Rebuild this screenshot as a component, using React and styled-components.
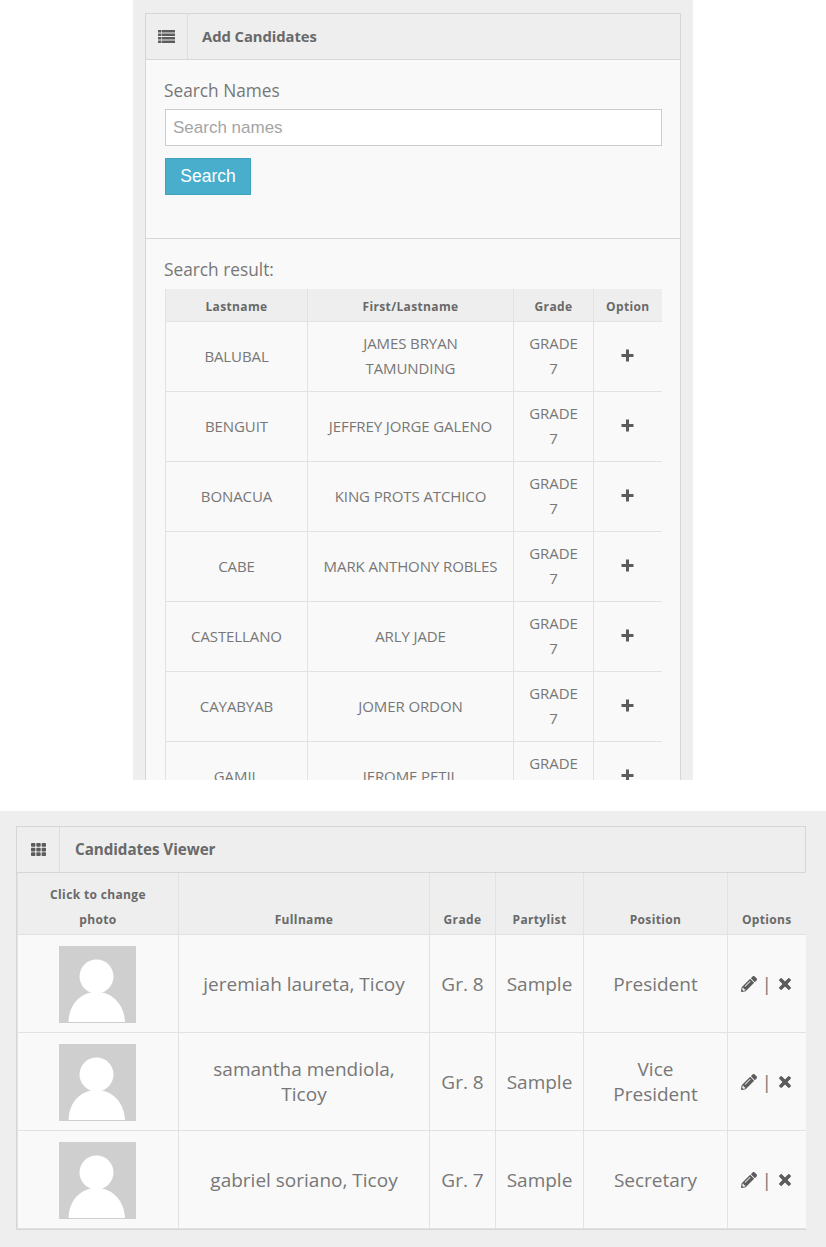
import React from "react";
import styled, { createGlobalStyle } from "styled-components";
import { FaTh, FaPencilAlt, FaTimes } from "react-icons/fa";

const GlobalStyle = createGlobalStyle`
  html, body {
    margin: 0;
    padding: 0;
    background: #fff;
    font-family: "Open Sans", sans-serif;
    color: #777777;
  }
  * { box-sizing: border-box; }
`;

const results = [
  ["BALUBAL", "JAMES BRYAN TAMUNDING"],
  ["BENGUIT", "JEFFREY JORGE GALENO"],
  ["BONACUA", "KING PROTS ATCHICO"],
  ["CABE", "MARK ANTHONY ROBLES"],
  ["CASTELLANO", "ARLY JADE"],
  ["CAYABYAB", "JOMER ORDON"],
  ["GAMIL", "JEROME PETIL"],
];

const candidates = [
  ["jeremiah laureta, Ticoy", "Gr. 8", "Sample", "President"],
  ["samantha mendiola, Ticoy", "Gr. 8", "Sample", "Vice President"],
  ["gabriel soriano, Ticoy", "Gr. 7", "Sample", "Secretary"],
];

const ListIcon = () => (
  <svg width="17" height="13" viewBox="0 0 17 13" fill="currentColor">
    <path d="M0 0h3v2.5H0zM3.6 0H17v2.5H3.6zM0 3.5h3V6H0zM3.6 3.5H17V6H3.6zM0 7h3v2.5H0zM3.6 7H17v2.5H3.6zM0 10.5h3V13H0zM3.6 10.5H17V13H3.6z" />
  </svg>
);

const PlusIcon = () => (
  <PlusSvg viewBox="0 0 13 13">
    <path d="M5 .5h3V5h4.5v3H8v4.5H5V8H.5V5H5z" />
  </PlusSvg>
);

const Avatar = () => (
  <AvatarSvg viewBox="0 0 77 77">
    <rect width="77" height="77" fill="#cfcfcf" />
    <circle cx="37.5" cy="30.5" r="17" fill="#fff" />
    <path d="M9.5 76 C10 58 22 46 37.5 46 C53 46 65 58 66 76 Z" fill="#fff" />
  </AvatarSvg>
);

const App = () => {
  return (
    <>
      <GlobalStyle />
      <TopStrip>
        <Panel>
          <PanelHead>
            <HeadIcon $width={42}>
              <ListIcon />
            </HeadIcon>
            <PanelTitle $left={14} $size={14.8}>
              Add Candidates
            </PanelTitle>
          </PanelHead>
          <SearchForm>
            <FieldLabel>Search Names</FieldLabel>
            <SearchInput placeholder="Search names" />
            <SearchButton>Search</SearchButton>
          </SearchForm>
          <ResultBody>
            <ResultLabel>Search result:</ResultLabel>
            <ResultTable>
              <thead>
                <tr>
                  <ResultHead $width={142}>Lastname</ResultHead>
                  <ResultHead $width={206}>First/Lastname</ResultHead>
                  <ResultHead $width={80}>Grade</ResultHead>
                  <ResultHead $width={68}>Option</ResultHead>
                </tr>
              </thead>
              <tbody>
                {results.map(([last, first]) => (
                  <tr key={last}>
                    <ResultCell>{last}</ResultCell>
                    <ResultCell>{first}</ResultCell>
                    <ResultCell>GRADE 7</ResultCell>
                    <ResultCell>
                      <PlusIcon />
                    </ResultCell>
                  </tr>
                ))}
              </tbody>
            </ResultTable>
          </ResultBody>
        </Panel>
      </TopStrip>
      <BottomStrip>
        <Panel>
          <PanelHead>
            <HeadIcon $width={43}>
              <FaTh />
            </HeadIcon>
            <PanelTitle $left={15} $size={15.2}>
              Candidates Viewer
            </PanelTitle>
          </PanelHead>
          <ViewerTable>
            <thead>
              <tr>
                <ViewerHead $width={161}>
                  Click to change
                  <br />
                  photo
                </ViewerHead>
                <ViewerHead $width={251}>Fullname</ViewerHead>
                <ViewerHead $width={66}>Grade</ViewerHead>
                <ViewerHead $width={88}>Partylist</ViewerHead>
                <ViewerHead $width={144}>Position</ViewerHead>
                <ViewerHead $width={78}>Options</ViewerHead>
              </tr>
            </thead>
            <tbody>
              {candidates.map(([name, grade, party, position]) => (
                <tr key={name}>
                  <ViewerCell>
                    <Avatar />
                  </ViewerCell>
                  <ViewerCell $wrap>{name}</ViewerCell>
                  <ViewerCell>{grade}</ViewerCell>
                  <ViewerCell>{party}</ViewerCell>
                  <ViewerCell $wrap>{position}</ViewerCell>
                  <ViewerCell>
                    <OptionIcons>
                      <FaPencilAlt />
                      <Separator>|</Separator>
                      <RemoveIcon />
                    </OptionIcons>
                  </ViewerCell>
                </tr>
              ))}
            </tbody>
          </ViewerTable>
        </Panel>
      </BottomStrip>
    </>
  );
};

const TopStrip = styled.div`
  width: 560px;
  height: 780px;
  margin: 0 0 31px 133px;
  padding: 13px 12px 0;
  background: #eeeeee;
  overflow: hidden;
`;

const BottomStrip = styled.div`
  height: 436px;
  padding: 15px 20px 0 16px;
  background: #eeeeee;
  overflow: hidden;
`;

const Panel = styled.div`
  background: #f9f9f9;
  border: 1px solid #d6d6d6;
`;

const PanelHead = styled.div`
  display: flex;
  align-items: stretch;
  height: 46px;
  background: #eeeeee;
  border-bottom: 1px solid #d6d6d6;
`;

const HeadIcon = styled.div`
  display: flex;
  align-items: center;
  justify-content: center;
  width: ${(p) => p.$width}px;
  border-right: 1px solid #dddddd;
  color: #5c5c5c;
  font-size: 15px;
`;

const PanelTitle = styled.div`
  display: flex;
  align-items: center;
  padding-left: ${(p) => p.$left}px;
  padding-bottom: 1px;
  font-size: ${(p) => p.$size}px;
  letter-spacing: -0.05px;
  font-weight: 700;
  color: #696969;
`;

const SearchForm = styled.div`
  height: 179px;
  padding: 20px 18px 0;
  border-bottom: 1px solid #d6d6d6;
`;

const FieldLabel = styled.div`
  font-size: 17.3px;
  line-height: 22px;
`;

const SearchInput = styled.input`
  display: block;
  width: 497px;
  height: 37px;
  margin: 7px 0 0 1px;
  padding: 0 7px;
  background: #fff;
  border: 1px solid #cccccc;
  border-radius: 0;
  outline: none;
  font-family: "Liberation Sans", sans-serif;
  font-size: 17px;
  &::placeholder {
    color: #a5a5a5;
    opacity: 1;
  }
`;

const SearchButton = styled.button`
  display: block;
  width: 86px;
  height: 37px;
  margin: 12px 0 0 1px;
  padding: 0;
  background: #48aecc;
  border: 1px solid #3fa3c0;
  border-radius: 0;
  color: #fff;
  font-family: "Liberation Sans", sans-serif;
  font-size: 17.5px;
`;

const ResultBody = styled.div`
  padding: 20px 18px 0;
`;

const ResultLabel = styled.div`
  font-size: 17.3px;
  line-height: 22px;
  margin-bottom: 8px;
`;

const ResultTable = styled.table`
  width: 496px;
  margin-left: 1px;
  table-layout: fixed;
  border-collapse: collapse;
`;

const ResultHead = styled.th`
  width: ${(p) => p.$width}px;
  height: 32px;
  padding: 3px 0 0;
  background: #eeeeee;
  border: 1px solid #e2e2e2;
  border-top: 0;
  font-size: 12px;
  letter-spacing: 0.35px;
  font-weight: 700;
  text-align: center;
  color: #696969;
  &:last-child {
    border-right: 0;
  }
`;

const ResultCell = styled.td`
  height: 70px;
  padding: 8px 15px;
  background: #f9f9f9;
  border: 1px solid #e2e2e2;
  font-size: 15px;
  line-height: 25px;
  letter-spacing: -0.1px;
  text-align: center;
  &:last-child {
    border-right: 0;
  }
`;

const PlusSvg = styled.svg`
  display: inline-block;
  vertical-align: middle;
  width: 13px;
  height: 13px;
  margin-bottom: 3px;
  fill: #5c5c5c;
`;

const ViewerTable = styled.table`
  width: 100%;
  table-layout: fixed;
  border-collapse: collapse;
`;

const ViewerHead = styled.th`
  width: ${(p) => p.$width}px;
  height: 61px;
  padding: 0 8px 2px;
  background: #eeeeee;
  border: 1px solid #e2e2e2;
  border-top: 0;
  font-size: 12px;
  letter-spacing: 0.35px;
  line-height: 25px;
  font-weight: 700;
  text-align: center;
  vertical-align: bottom;
  color: #696969;
  &:last-child {
    border-right: 0;
  }
`;

const ViewerCell = styled.td`
  height: 98px;
  padding: 11px ${(p) => (p.$wrap ? 15 : 10)}px 9px;
  background: #f9f9f9;
  border: 1px solid #e2e2e2;
  font-size: 19px;
  line-height: 25px;
  text-align: center;
  &:last-child {
    border-right: 0;
  }
`;

const AvatarSvg = styled.svg`
  display: block;
  width: 77px;
  height: 77px;
  margin-left: 31px;
`;

const OptionIcons = styled.div`
  display: flex;
  align-items: center;
  justify-content: center;
  gap: 5px;
  font-size: 16px;
  color: #5c5c5c;
`;

const Separator = styled.span`
  font-size: 19px;
  font-weight: 400;
  color: #777777;
`;

const RemoveIcon = styled(FaTimes)`
  stroke: currentColor;
  stroke-width: 30px;
`;

export default App;
